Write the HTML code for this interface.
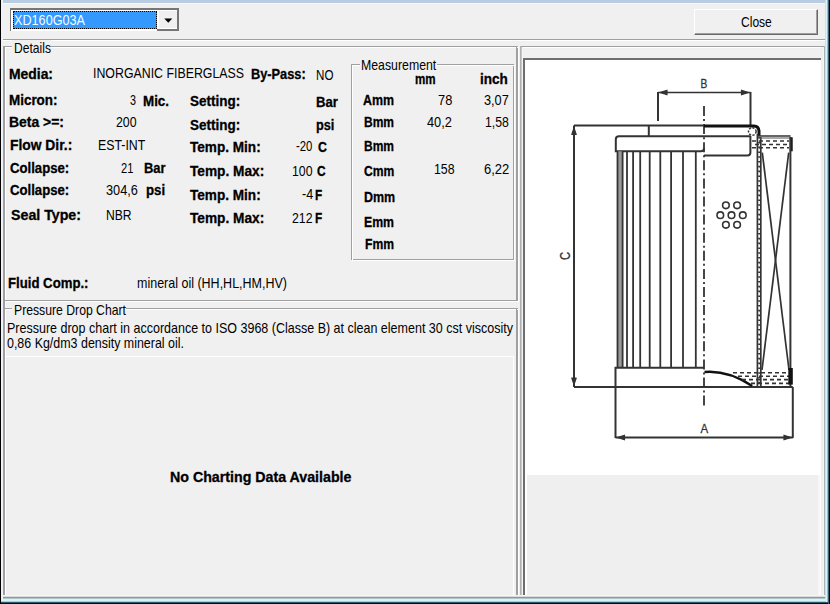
<!DOCTYPE html>
<html><head><meta charset="utf-8"><style>
html,body{margin:0;padding:0;width:830px;height:604px;overflow:hidden;background:#f0f0f0}
body>div,body>svg{position:absolute}
.t{position:absolute;white-space:nowrap;line-height:0;font-family:"Liberation Sans",sans-serif;color:#000;transform-origin:0 0}
.b{font-weight:bold;font-size:14.5px;-webkit-text-stroke:0.3px #000}
.r{font-size:15px}
</style></head><body>
<div style="left:0px;top:0px;width:830px;height:604px;background:#f0f0f0"></div>
<div style="left:10px;top:8px;width:169px;height:23px;background:#fff;border-top:2px solid #767676;border-left:1px solid #767676;border-right:2px solid #767676;box-sizing:border-box"></div>
<div style="left:13px;top:11px;width:144px;height:18px;background:#3399ff;outline:1px dotted #000;outline-offset:-1px"></div>
<div style="left:158px;top:10px;width:19px;height:18px;background:#f0f0f0;border-top:1px solid #fff;border-left:1px solid #fff;box-sizing:border-box"></div>
<div style="left:157px;top:29px;width:22px;height:2px;background:#767676"></div>
<svg style="left:0;top:0" width="200" height="40"><path d="M164.3 18.6H172.3L168.3 22.8Z" fill="#000"/></svg>
<div style="left:694px;top:9px;width:124px;height:26px;background:#f0f0f0;border-top:1px solid #fff;border-left:1px solid #fff;border-right:1px solid #696969;border-bottom:1px solid #696969;box-sizing:border-box;box-shadow:inset -1px -1px 0 #a0a0a0"></div>
<div style="left:3px;top:39px;width:822px;height:1px;background:#a0a0a0"></div>
<div style="left:3px;top:40px;width:822px;height:1px;background:#ffffff"></div>
<div style="left:3px;top:46px;width:515px;height:1px;background:#a0a0a0"></div>
<div style="left:3px;top:46px;width:1px;height:255px;background:#a0a0a0"></div>
<div style="left:3px;top:300px;width:515px;height:1px;background:#a0a0a0"></div>
<div style="left:517px;top:46px;width:1px;height:255px;background:#a0a0a0"></div>
<div style="left:4px;top:47px;width:515px;height:1px;background:#ffffff"></div>
<div style="left:4px;top:47px;width:1px;height:255px;background:#ffffff"></div>
<div style="left:4px;top:301px;width:515px;height:1px;background:#ffffff"></div>
<div style="left:518px;top:47px;width:1px;height:255px;background:#ffffff"></div>
<div style="left:516px;top:46px;width:1px;height:255px;background:#a0a0a0"></div>
<div style="left:351px;top:64px;width:163px;height:1px;background:#a0a0a0"></div>
<div style="left:351px;top:64px;width:1px;height:196px;background:#a0a0a0"></div>
<div style="left:351px;top:259px;width:163px;height:1px;background:#a0a0a0"></div>
<div style="left:513px;top:64px;width:1px;height:196px;background:#a0a0a0"></div>
<div style="left:352px;top:65px;width:163px;height:1px;background:#ffffff"></div>
<div style="left:352px;top:65px;width:1px;height:196px;background:#ffffff"></div>
<div style="left:352px;top:260px;width:163px;height:1px;background:#ffffff"></div>
<div style="left:514px;top:65px;width:1px;height:196px;background:#ffffff"></div>
<div style="left:3px;top:308px;width:515px;height:1px;background:#a0a0a0"></div>
<div style="left:3px;top:308px;width:1px;height:289px;background:#a0a0a0"></div>
<div style="left:3px;top:596px;width:515px;height:1px;background:#a0a0a0"></div>
<div style="left:517px;top:308px;width:1px;height:289px;background:#a0a0a0"></div>
<div style="left:4px;top:309px;width:515px;height:1px;background:#ffffff"></div>
<div style="left:4px;top:309px;width:1px;height:289px;background:#ffffff"></div>
<div style="left:4px;top:597px;width:515px;height:1px;background:#ffffff"></div>
<div style="left:518px;top:309px;width:1px;height:289px;background:#ffffff"></div>
<div style="left:516px;top:308px;width:1px;height:289px;background:#a0a0a0"></div>
<div style="left:3px;top:46px;width:2px;height:552px;background:#a0a0a0"></div>
<div style="left:5px;top:47px;width:1px;height:254px;background:#ffffff"></div>
<div style="left:5px;top:309px;width:1px;height:288px;background:#ffffff"></div>
<div style="left:5px;top:301px;width:1px;height:7px;background:#f8f8f8"></div>
<div style="left:5px;top:300px;width:16px;height:1px;background:#a0a0a0"></div>
<div style="left:5px;top:308px;width:8px;height:1px;background:#a0a0a0"></div>
<div style="left:5px;top:47px;width:16px;height:1px;background:#ffffff"></div>
<div style="left:520px;top:46px;width:305px;height:1px;background:#a0a0a0"></div>
<div style="left:521px;top:47px;width:304px;height:1px;background:#ffffff"></div>
<div style="left:520px;top:46px;width:1px;height:552px;background:#b0b0b0"></div>
<div style="left:521px;top:47px;width:1px;height:551px;background:#c8c8c8"></div>
<div style="left:522px;top:47px;width:1px;height:551px;background:#f4f4f4"></div>
<div style="left:6px;top:356px;width:508px;height:1px;background:#ffffff"></div>
<div style="left:513px;top:356px;width:1px;height:239px;background:#ffffff"></div>
<div style="left:523px;top:58px;width:299px;height:537px;background:#fff;border-left:2px solid #6e6e6e;border-top:2px solid #6e6e6e;box-sizing:border-box"></div>
<div style="left:527px;top:475px;width:291px;height:120px;background:#efefef"></div>
<div style="left:818px;top:475px;width:2px;height:120px;background:#fbf3f5"></div>
<div style="left:821px;top:47px;width:2px;height:551px;background:#eef0ee"></div>
<div style="left:823px;top:47px;width:1px;height:551px;background:#f4f8f4"></div>
<div style="left:824px;top:46px;width:1px;height:553px;background:#aab4b8"></div>
<div style="left:12px;top:40px;width:39px;height:12px;background:#f0f0f0"></div>
<div style="left:360px;top:58px;width:77px;height:11px;background:#f0f0f0"></div>
<div style="left:12px;top:302px;width:114px;height:12px;background:#f0f0f0"></div>
<div style="left:0px;top:0px;width:830px;height:3px;background:#b8cde2"></div>
<div style="left:1px;top:3px;width:828px;height:1px;background:#f5f9fd"></div>
<div style="left:3px;top:595px;width:822px;height:1px;background:#fbf3f3"></div>
<div style="left:3px;top:596px;width:822px;height:1px;background:#d8dcdc"></div>
<div style="left:3px;top:597px;width:822px;height:1px;background:#909898"></div>
<div style="left:3px;top:598px;width:822px;height:1px;background:#b4c4c6"></div>
<div style="left:1px;top:599px;width:829px;height:2px;background:#d0f8fc"></div>
<div style="left:1px;top:601px;width:829px;height:1px;background:#a0d0d8"></div>
<div style="left:1px;top:602px;width:829px;height:1px;background:#305868"></div>
<div style="left:1px;top:603px;width:829px;height:1px;background:#001018"></div>
<div style="left:825px;top:0px;width:1px;height:599px;background:#d0e0e8"></div>
<div style="left:826px;top:0px;width:1px;height:602px;background:#d8f4fc"></div>
<div style="left:827px;top:0px;width:1px;height:602px;background:#98c0cc"></div>
<div style="left:828px;top:0px;width:1px;height:604px;background:#406070"></div>
<div style="left:829px;top:0px;width:1px;height:604px;background:#000a14"></div>
<div style="left:0px;top:0px;width:1px;height:604px;background:#000"></div>
<div style="left:1px;top:0px;width:2px;height:599px;background:#eef2f8"></div>
<div class="t r" style="left:14.00px;top:47.70px;transform:scaleX(0.8071)">Details</div>
<div class="t b" style="left:9.00px;top:73.78px;transform:scaleX(0.9581)">Media:</div>
<div class="t r" style="left:92.80px;top:73.20px;transform:scaleX(0.8236)">INORGANIC FIBERGLASS</div>
<div class="t b" style="left:250.70px;top:74.18px;transform:scaleX(0.8816)">By-Pass:</div>
<div class="t r" style="left:316.20px;top:74.70px;transform:scaleX(0.7733)">NO</div>
<div class="t b" style="left:9.00px;top:100.38px;transform:scaleX(0.9263)">Micron:</div>
<div class="t r" style="left:130.00px;top:100.20px;transform:scaleX(0.7191)">3</div>
<div class="t b" style="left:142.70px;top:101.38px;transform:scaleX(0.9219)">Mic.</div>
<div class="t b" style="left:190.20px;top:100.88px;transform:scaleX(0.9302)">Setting:</div>
<div class="t b" style="left:316.20px;top:102.08px;transform:scaleX(0.9060)">Bar</div>
<div class="t b" style="left:9.00px;top:122.18px;transform:scaleX(0.9612)">Beta &gt;=:</div>
<div class="t r" style="left:115.60px;top:122.00px;transform:scaleX(0.8230)">200</div>
<div class="t b" style="left:190.20px;top:124.58px;transform:scaleX(0.9302)">Setting:</div>
<div class="t b" style="left:316.20px;top:124.58px;transform:scaleX(0.8782)">psi</div>
<div class="t b" style="left:10.40px;top:145.38px;transform:scaleX(0.9546)">Flow Dir.:</div>
<div class="t r" style="left:97.60px;top:145.20px;transform:scaleX(0.8228)">EST-INT</div>
<div class="t b" style="left:190.20px;top:146.58px;transform:scaleX(0.9370)">Temp. Min:</div>
<div class="t r" style="left:295.70px;top:146.40px;transform:scaleX(0.7562)">-20</div>
<div class="t b" style="left:317.60px;top:146.58px;transform:scaleX(0.8501)">C</div>
<div class="t b" style="left:9.80px;top:167.68px;transform:scaleX(0.9071)">Collapse:</div>
<div class="t r" style="left:121.00px;top:167.50px;transform:scaleX(0.7431)">21</div>
<div class="t b" style="left:143.80px;top:167.68px;transform:scaleX(0.8895)">Bar</div>
<div class="t b" style="left:189.80px;top:170.98px;transform:scaleX(0.9430)">Temp. Max:</div>
<div class="t r" style="left:291.60px;top:170.80px;transform:scaleX(0.8190)">100</div>
<div class="t b" style="left:316.80px;top:170.98px;transform:scaleX(0.8215)">C</div>
<div class="t b" style="left:9.80px;top:190.38px;transform:scaleX(0.9071)">Collapse:</div>
<div class="t r" style="left:105.80px;top:190.20px;transform:scaleX(0.8496)">304,6</div>
<div class="t b" style="left:145.70px;top:190.38px;transform:scaleX(0.9116)">psi</div>
<div class="t b" style="left:189.80px;top:194.58px;transform:scaleX(0.9370)">Temp. Min:</div>
<div class="t r" style="left:301.90px;top:194.40px;transform:scaleX(0.8393)">-4</div>
<div class="t b" style="left:315.20px;top:194.58px;transform:scaleX(0.8127)">F</div>
<div class="t b" style="left:11.30px;top:215.38px;transform:scaleX(0.9797)">Seal Type:</div>
<div class="t r" style="left:106.30px;top:215.20px;transform:scaleX(0.8087)">NBR</div>
<div class="t b" style="left:189.80px;top:218.08px;transform:scaleX(0.9430)">Temp. Max:</div>
<div class="t r" style="left:291.60px;top:217.90px;transform:scaleX(0.8190)">212</div>
<div class="t b" style="left:315.20px;top:218.08px;transform:scaleX(0.8127)">F</div>
<div class="t b" style="left:8.10px;top:283.48px;transform:scaleX(0.9085)">Fluid Comp.:</div>
<div class="t r" style="left:136.50px;top:283.20px;transform:scaleX(0.8332)">mineral oil (HH,HL,HM,HV)</div>
<div class="t r" style="left:360.80px;top:65.40px;transform:scaleX(0.8208)">Measurement</div>
<div class="t b" style="left:414.60px;top:78.88px;transform:scaleX(0.7990)">mm</div>
<div class="t b" style="left:479.90px;top:78.88px;transform:scaleX(0.9358)">inch</div>
<div class="t b" style="left:362.90px;top:99.88px;transform:scaleX(0.8552)">Amm</div>
<div class="t r" style="left:437.80px;top:99.70px;transform:scaleX(0.8569)">78</div>
<div class="t r" style="left:484.20px;top:99.70px;transform:scaleX(0.8492)">3,07</div>
<div class="t b" style="left:364.00px;top:122.48px;transform:scaleX(0.8276)">Bmm</div>
<div class="t r" style="left:427.20px;top:122.30px;transform:scaleX(0.8526)">40,2</div>
<div class="t r" style="left:485.20px;top:122.30px;transform:scaleX(0.8150)">1,58</div>
<div class="t b" style="left:364.00px;top:145.68px;transform:scaleX(0.8276)">Bmm</div>
<div class="t b" style="left:363.60px;top:170.68px;transform:scaleX(0.8359)">Cmm</div>
<div class="t r" style="left:433.60px;top:169.40px;transform:scaleX(0.8230)">158</div>
<div class="t r" style="left:483.70px;top:169.40px;transform:scaleX(0.8663)">6,22</div>
<div class="t b" style="left:364.00px;top:196.58px;transform:scaleX(0.8607)">Dmm</div>
<div class="t b" style="left:364.00px;top:221.68px;transform:scaleX(0.8462)">Emm</div>
<div class="t b" style="left:365.00px;top:244.08px;transform:scaleX(0.8372)">Fmm</div>
<div class="t r" style="left:13.60px;top:310.40px;transform:scaleX(0.8141)">Pressure Drop Chart</div>
<div class="t r" style="left:6.90px;top:328.10px;transform:scaleX(0.8335)">Pressure drop chart in accordance to ISO 3968 (Classe B) at clean element 30 cst viscosity</div>
<div class="t r" style="left:6.90px;top:343.10px;transform:scaleX(0.8291)">0,86 Kg/dm3 density mineral oil.</div>
<div class="t b" style="left:170.10px;top:477.38px;transform:scaleX(0.9807)">No Charting Data Available</div>
<div class="t r" style="left:740.50px;top:21.90px;transform:scaleX(0.8033)">Close</div>
<div class="t" style="left:14.2px;top:19.58px;font-size:14.5px;color:#f4fcff;transform:scaleX(0.8722)">XD160G03A</div>
<svg style="left:0;top:0" width="830" height="604"><line x1="658" y1="92.5" x2="750.5" y2="92.5" stroke="#333" stroke-width="1.6" />
<line x1="658" y1="92" x2="658" y2="121" stroke="#333" stroke-width="2" />
<line x1="750.5" y1="92" x2="750.5" y2="125" stroke="#333" stroke-width="2" />
<path d="M660 92.5L667 90.2L667 94.8Z M748.5 92.5L741.5 90.2L741.5 94.8Z" fill="#333" stroke="#333" stroke-width="1.2" stroke-linejoin="round"/>
<line x1="704" y1="106" x2="704" y2="406" stroke="#333" stroke-width="1.8" stroke-dasharray="10 3.05 2 3.05"/>
<line x1="574" y1="125.5" x2="704" y2="125.5" stroke="#333" stroke-width="2" />
<path d="M704 126H754Q758.5 126 759 131V136" fill="none" stroke="#111" stroke-width="3" />
<line x1="648.8" y1="125.5" x2="648.8" y2="136.5" stroke="#333" stroke-width="2" />
<path d="M704 136.2H619Q615.8 136.2 615.8 139.4V151.3H701Q704 151.3 704 148.3" fill="none" stroke="#333" stroke-width="2" />
<line x1="704" y1="136.2" x2="750.4" y2="136.2" stroke="#333" stroke-width="2" />
<path d="M750.4 136V152.5Q750.4 155.5 747.4 155.5H704" fill="none" stroke="#333" stroke-width="2" />
<circle cx="752.3" cy="131.5" r="3.8" fill="none" stroke="#333" stroke-width="1.5" stroke-dasharray="2.2 1.3"/>
<rect x="618" y="151.3" width="4" height="216.4" fill="#9a9a9a"/>
<line x1="617.5" y1="151.3" x2="617.5" y2="367.7" stroke="#333" stroke-width="1.8" />
<line x1="622.6" y1="151.3" x2="622.6" y2="367.7" stroke="#333" stroke-width="1.8" />
<line x1="627" y1="151.3" x2="627" y2="367.7" stroke="#333" stroke-width="1.8" />
<line x1="633.1" y1="151.3" x2="633.1" y2="367.7" stroke="#333" stroke-width="1.8" />
<line x1="640.2" y1="151.3" x2="640.2" y2="367.7" stroke="#333" stroke-width="1.8" />
<line x1="649.7" y1="151.3" x2="649.7" y2="367.7" stroke="#333" stroke-width="1.8" />
<line x1="660.3" y1="151.3" x2="660.3" y2="367.7" stroke="#333" stroke-width="1.8" />
<line x1="671.1" y1="151.3" x2="671.1" y2="367.7" stroke="#333" stroke-width="1.8" />
<line x1="683" y1="151.3" x2="683" y2="367.7" stroke="#333" stroke-width="1.8" />
<line x1="695.8" y1="151.3" x2="695.8" y2="367.7" stroke="#333" stroke-width="1.8" />
<path d="M704 367.7H615.5V387" fill="none" stroke="#333" stroke-width="2" />
<line x1="574" y1="387" x2="792.8" y2="387" stroke="#333" stroke-width="2" />
<line x1="574" y1="125.5" x2="574" y2="387" stroke="#333" stroke-width="2" />
<path d="M574 128L571.8 134.5L576.2 134.5Z M574 384.5L571.8 378L576.2 378Z" fill="#333" stroke="#333" stroke-width="1.2" stroke-linejoin="round"/>
<circle cx="725.9" cy="205.3" r="3.3" fill="none" stroke="#333" stroke-width="1.6"/>
<circle cx="737.1" cy="205.3" r="3.3" fill="none" stroke="#333" stroke-width="1.6"/>
<circle cx="720.3" cy="215.2" r="3.3" fill="none" stroke="#333" stroke-width="1.6"/>
<circle cx="731.5" cy="215.2" r="3.3" fill="none" stroke="#333" stroke-width="1.6"/>
<circle cx="742.8" cy="215.2" r="3.3" fill="none" stroke="#333" stroke-width="1.6"/>
<circle cx="725.9" cy="224.8" r="3.3" fill="none" stroke="#333" stroke-width="1.6"/>
<circle cx="737.1" cy="224.8" r="3.3" fill="none" stroke="#333" stroke-width="1.6"/>
<line x1="757.4" y1="134" x2="757.4" y2="387" stroke="#333" stroke-width="1.7" />
<line x1="760.8" y1="137" x2="760.8" y2="387" stroke="#333" stroke-width="1.7" />
<line x1="759.1" y1="137" x2="759.1" y2="387" stroke="#333" stroke-width="1.8" stroke-dasharray="1.6 3.2"/>
<line x1="758" y1="136" x2="790.6" y2="136" stroke="#333" stroke-width="1.3" />
<line x1="758" y1="138" x2="790.6" y2="138" stroke="#555" stroke-width="1.1" />
<line x1="752" y1="141" x2="789" y2="141" stroke="#333" stroke-width="1.6" stroke-dasharray="4 3"/>
<line x1="755" y1="144.5" x2="789" y2="144.5" stroke="#333" stroke-width="1.6" stroke-dasharray="4 3"/>
<line x1="752" y1="147.8" x2="789" y2="147.8" stroke="#333" stroke-width="1.6" stroke-dasharray="4 3"/>
<rect x="789.7" y="137.3" width="3" height="14" fill="#111"/>
<line x1="790.4" y1="137" x2="790.4" y2="387" stroke="#333" stroke-width="2" />
<line x1="762.3" y1="152.7" x2="789" y2="370" stroke="#333" stroke-width="1.7" />
<line x1="788.7" y1="152.7" x2="762" y2="370" stroke="#333" stroke-width="1.7" />
<path d="M704.5 372Q728 370 752.2 386" fill="none" stroke="#111" stroke-width="2.6" />
<line x1="733" y1="372.8" x2="789" y2="372.8" stroke="#333" stroke-width="1.6" stroke-dasharray="4 3"/>
<line x1="738" y1="376.2" x2="789" y2="376.2" stroke="#333" stroke-width="1.6" stroke-dasharray="4 3"/>
<line x1="742" y1="379.6" x2="789" y2="379.6" stroke="#333" stroke-width="1.6" stroke-dasharray="4 3"/>
<line x1="751" y1="383.4" x2="789" y2="383.4" stroke="#333" stroke-width="1.6" stroke-dasharray="4 3"/>
<rect x="788.3" y="368" width="4.5" height="16.6" fill="#111"/>
<line x1="615.5" y1="437.5" x2="792.8" y2="437.5" stroke="#333" stroke-width="1.8" />
<line x1="615.5" y1="387" x2="615.5" y2="438" stroke="#333" stroke-width="2" />
<line x1="792.8" y1="387" x2="792.8" y2="438" stroke="#333" stroke-width="2" />
<path d="M617.5 437.5L624.5 435.2L624.5 439.8Z M791 437.5L784 435.2L784 439.8Z" fill="#333" stroke="#333" stroke-width="1.2" stroke-linejoin="round"/>
<text x="0" y="0" font-family="Liberation Sans" font-size="12" fill="#333" stroke="#333" stroke-width="0.3" transform="translate(700.6 87.6) scale(0.85 1)">B</text>
<text x="0" y="0" font-family="Liberation Sans" font-size="13.5" fill="#333" stroke="#333" stroke-width="0.3" transform="translate(700.5 432.8) scale(0.85 1)">A</text>
<text x="0" y="0" font-family="Liberation Sans" font-size="14" fill="#333" stroke="#333" stroke-width="0.3" transform="translate(569.9 260) rotate(-90) scale(0.8 1)">C</text></svg>
</body></html>
